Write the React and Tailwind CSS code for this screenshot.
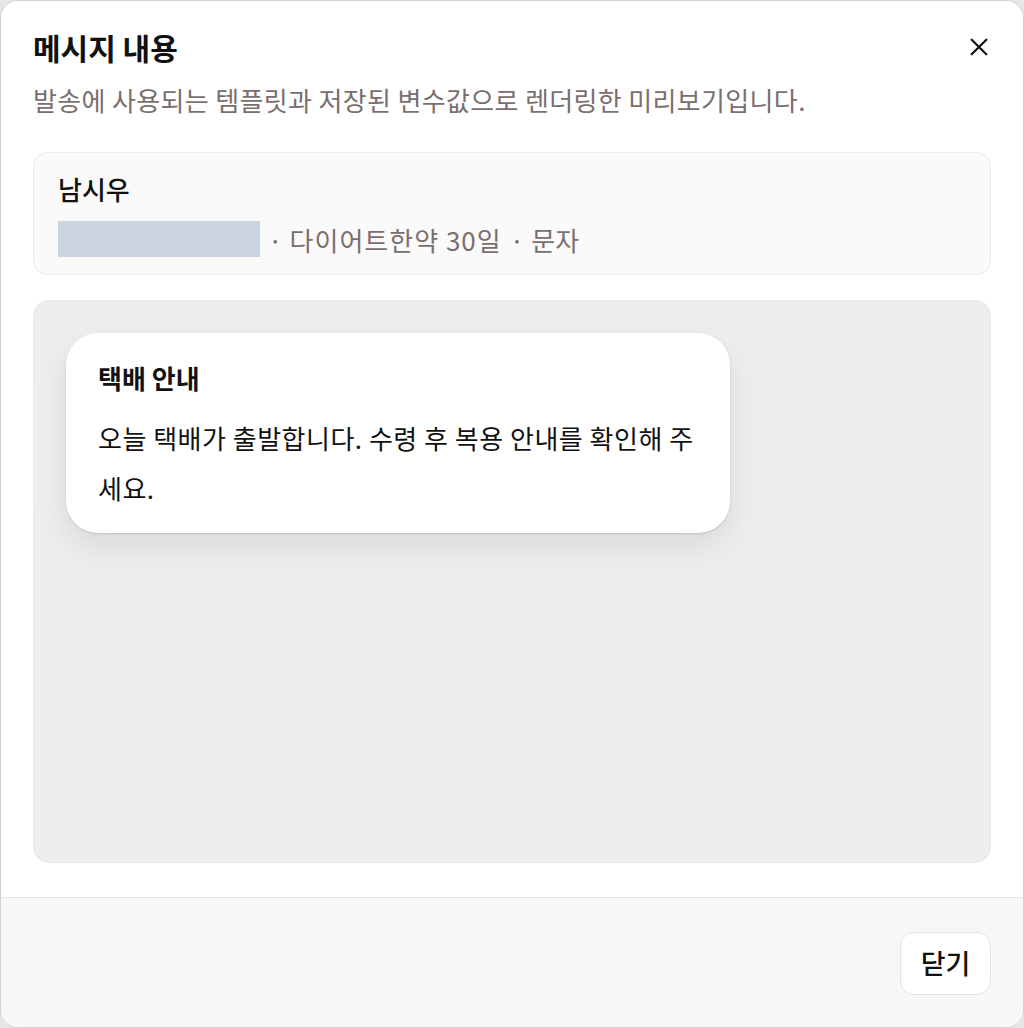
import React from "react";

export default function App() {
  return (
    <div
      className="w-[1024px] h-[1028px] bg-[#e6e6e6]"
      style={{ fontFamily: '"Noto Sans CJK KR", "Noto Sans", sans-serif' }}
    >
      <div className="w-full h-full bg-white rounded-[18px] border border-[#d2d2d2] overflow-hidden flex flex-col">
        <div className="flex-1 flex flex-col px-[32px] pt-[27px]">
          <div className="flex items-center justify-between">
            <h2 className="text-[30px] leading-[38px] font-semibold text-[#111111]">메시지 내용</h2>
            <button className="w-[30px] h-[30px] flex items-center justify-center -mr-[3px] text-[#111]">
              <svg width="22" height="22" viewBox="0 0 24 24" fill="none" stroke="currentColor" strokeWidth="2.4" strokeLinecap="round">
                <path d="M4 4L20 20M20 4L4 20" />
              </svg>
            </button>
          </div>
          <p className="mt-[18px] text-[26px] leading-[32px] text-[#7a6e6e] tracking-[0.35px]">
            발송에 사용되는 템플릿과 저장된 변수값으로 렌더링한 미리보기입니다.
          </p>

          <div className="mt-[36px] rounded-[14px] border border-[#ececec] bg-[#fafafa] px-[24px] pt-[21px] pb-[17px]">
            <div className="text-[26px] leading-[30px] font-medium text-[#111]">남시우</div>
            <div className="mt-[17px] flex items-center h-[36px] text-[26px] text-[#7a6e6e]">
              <span className="inline-block w-[202px] h-[36px] bg-[#cbd5e1]" />
              <span className="ml-[8px]">·</span>
              <span className="ml-[7px] tracking-[1px]">다이어트한약 30일</span>
              <span className="ml-[8px]">·</span>
              <span className="ml-[7px]">문자</span>
            </div>
          </div>

          <div className="mt-[25px] h-[563px] rounded-[16px] border border-[#e9e9e9] bg-[#eeeeee] p-[32px]">
            <div className="w-[664px] rounded-[32px] bg-white px-[32px] pt-[29px] pb-[20px] shadow-[0_14px_34px_rgba(0,0,0,0.09),0_1px_2px_rgba(100,116,139,0.25)]">
              <div className="text-[26px] leading-[32px] font-bold text-[#111]">택배 안내</div>
              <p className="mt-[19px] text-[26px] leading-[50px] text-[#111] tracking-[0.5px]">
                오늘 택배가 출발합니다. 수령 후 복용 안내를 확인해 주세요.
              </p>
            </div>
          </div>
        </div>

        <div className="mt-[33px] h-[130px] border-t border-[#e3e3e3] bg-[#f7f7f7] flex items-start justify-end px-[32px] pt-[34px]">
          <button className="w-[91px] h-[63px] rounded-[14px] border border-[#e3e3e3] bg-white text-[27px] font-medium text-[#111]">
            닫기
          </button>
        </div>
      </div>
    </div>
  );
}
